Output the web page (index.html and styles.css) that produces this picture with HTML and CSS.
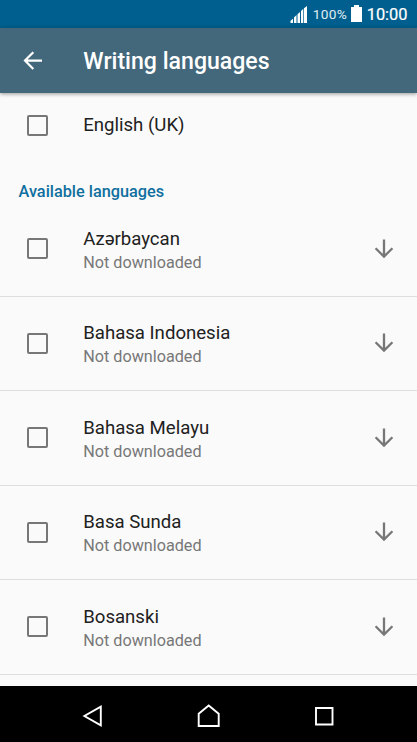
FILE: index.html
```html
<!DOCTYPE html>
<html lang="en">
<head>
<meta charset="utf-8">
<title>Writing languages</title>
<link rel="stylesheet" href="styles.css">
</head>
<body>
<svg width="0" height="0" class="defs" aria-hidden="true">
  <symbol id="down" viewBox="0 0 20 20"><path d="M10 0.5V17.6M1.6 9.3L10 17.6L18.4 9.3" fill="none" stroke="#777" stroke-width="2.3"/></symbol>
</svg>
<div class="status">
  <svg class="signal" width="18" height="18" viewBox="0 0 18 18"><path d="M0.5 17V14.8L3 12.7V17zM4 17V11.4L6.5 9.1V17zM7.5 17V8.2L10 5.9V17zM11 17V5L13.3 2.8V17zM14 17V2.2L17 0V17z" fill="#fff"/></svg>
  <span class="percent">100%</span>
  <svg class="battery" width="11" height="17" viewBox="0 0 11 17"><path d="M3 0h5v2h3v15H0V2h3z" fill="#fff"/></svg>
  <span class="clock">10:00</span>
</div>
<header class="bar">
  <svg class="back" width="20" height="20" viewBox="0 0 20 20"><path d="M19 9.6H2M10.3 1.2L2 9.6L10.3 18" fill="none" stroke="#fff" stroke-width="2.2"/></svg>
  <h1 class="title">Writing languages</h1>
</header>
<main class="list">
  <div class="single"><span class="check"></span><span class="name">English (UK)</span></div>
  <h2 class="section">Available languages</h2>
  <div class="row"><span class="check"></span><div class="text"><div class="name">Azərbaycan</div><div class="sub">Not downloaded</div></div><svg class="down"><use href="#down"/></svg></div>
  <div class="row"><span class="check"></span><div class="text"><div class="name">Bahasa Indonesia</div><div class="sub">Not downloaded</div></div><svg class="down"><use href="#down"/></svg></div>
  <div class="row"><span class="check"></span><div class="text"><div class="name">Bahasa Melayu</div><div class="sub">Not downloaded</div></div><svg class="down"><use href="#down"/></svg></div>
  <div class="row"><span class="check"></span><div class="text"><div class="name">Basa Sunda</div><div class="sub">Not downloaded</div></div><svg class="down"><use href="#down"/></svg></div>
  <div class="row"><span class="check"></span><div class="text"><div class="name">Bosanski</div><div class="sub">Not downloaded</div></div><svg class="down"><use href="#down"/></svg></div>
</main>
<nav class="nav">
  <svg width="24" height="24" viewBox="0 0 24 24"><path d="M21.8 2.7V21.3L5.4 12z"/></svg>
  <svg width="24" height="24" viewBox="0 0 24 24"><path d="M2.7 22V9.8L12.7 1.4L22.7 9.8V22z"/></svg>
  <svg width="24" height="24" viewBox="0 0 24 24"><path d="M4 4H20.5V20.5H4z"/></svg>
</nav>
</body>
</html>
```

FILE: styles.css
```css
* { box-sizing: border-box; }
body {
  margin: 0;
  width: 417px;
  height: 742px;
  overflow: hidden;
  display: flex;
  flex-direction: column;
  background: #fafafa;
  font-family: Roboto, sans-serif;
  color: #212121;
}
.defs { display: none; }
svg { display: block; flex: none; }
.status {
  flex: none;
  height: 28px;
  display: flex;
  align-items: center;
  justify-content: flex-end;
  padding-right: 9.5px;
  background: #005f8e;
  color: #fff;
}
.signal { margin: 1px 4.5px 0 0; }
.percent { font-size: 13.7px; line-height: 28px; letter-spacing: 0.3px; color: #e0edf4; }
.battery { margin: -1px 5px 0 3.5px; }
.clock { font-size: 16.4px; font-weight: 400; line-height: 30px; padding-top: 2px; -webkit-text-stroke: 0.2px #fff; }
.bar {
  flex: none;
  position: relative;
  height: 65px;
  display: flex;
  align-items: center;
  padding: 0 0 0 22.6px;
  background: #43677b;
  box-shadow: 0 1px 4px rgba(0, 0, 0, 0.4);
}
.title { margin: 2px 0 0 40.7px; font-size: 23.1px; font-weight: 500; line-height: 30px; color: #fff; }
.list { flex: none; height: 593px; overflow: hidden; }
.single { height: 65px; display: flex; align-items: center; padding-left: 26.5px; }
.single .name { margin-top: -2px; }
.section { margin: 0; height: 44px; padding: 22px 0 0 18.5px; font-size: 16.3px; font-weight: 500; line-height: 24px; color: #0f6f9f; }
.row {
  height: 94.5px;
  display: flex;
  align-items: center;
  padding: 0 23px 0 26.5px;
  border-bottom: 1px solid #dedede;
}
.check { flex: none; width: 21px; height: 21px; margin-right: 35.7px; border: 2px solid #777; border-radius: 2px; }
.text { flex: 1; padding-top: 3px; }
.name { font-size: 18.6px; line-height: 24px; }
.sub { font-size: 16.2px; line-height: 23px; color: #777; }
.down { width: 20px; height: 20px; }
.nav {
  flex: none;
  height: 56px;
  display: flex;
  align-items: center;
  justify-content: space-between;
  padding: 3px 81px 0 79px;
  background: #000;
}
.nav path { fill: none; stroke: #fff; stroke-width: 1.9; }
```
